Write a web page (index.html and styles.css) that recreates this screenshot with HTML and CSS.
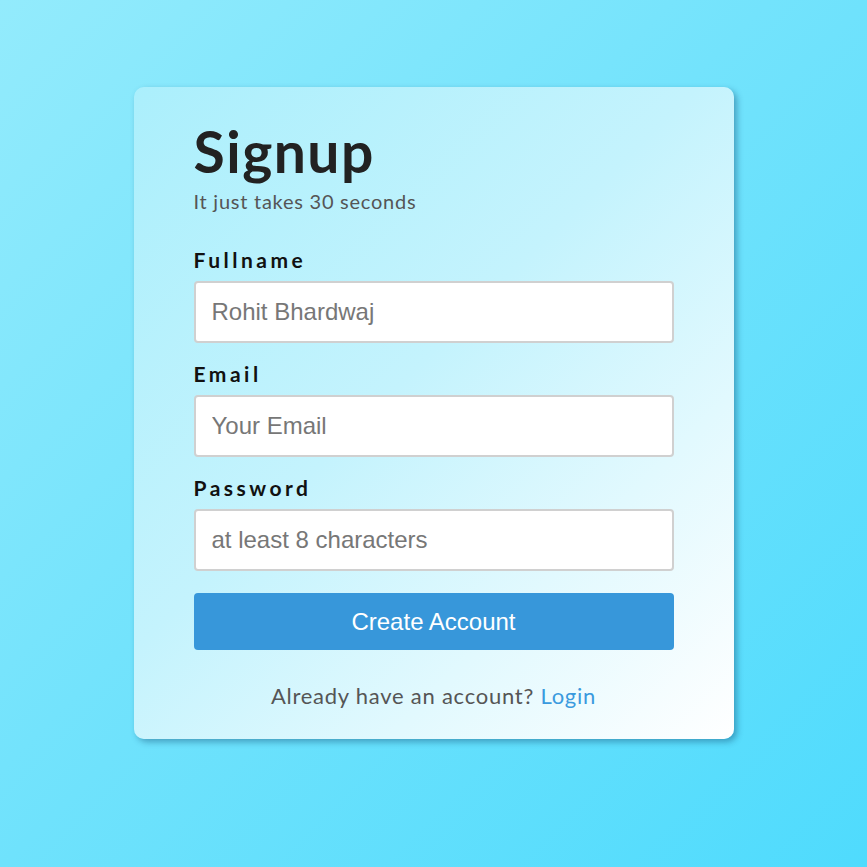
FILE: index.html
```html
<!DOCTYPE html>
<html lang="en">
<head>
<meta charset="utf-8">
<title>Signup</title>
<link rel="stylesheet" href="styles.css">
</head>
<body>
  <main class="page">
    <form class="card">
      <h1 class="title">Signup</h1>
      <p class="subtitle">It just takes 30 seconds</p>
      <label class="label" for="fullname">Fullname</label>
      <input class="input" id="fullname" type="text" placeholder="Rohit Bhardwaj">
      <label class="label" for="email">Email</label>
      <input class="input" id="email" type="email" placeholder="Your Email">
      <label class="label" for="password">Password</label>
      <input class="input" id="password" type="password" placeholder="at least 8 characters">
      <button class="button" type="button">Create Account</button>
      <p class="footer">Already have an account? <a class="link" href="#">Login</a></p>
    </form>
  </main>
</body>
</html>
```
FILE: styles.css
```css
html, body {
  margin: 0;
  padding: 0;
}
body {
  min-height: 100vh;
  background: linear-gradient(135deg, #93ebfc 0%, #6fe2fc 50%, #4fdbfd 100%);
  font-family: "Lato", "Liberation Sans", sans-serif;
}
.page {
  display: flex;
  justify-content: center;
  padding-top: 87px;
  min-height: 100vh;
  box-sizing: border-box;
}
.card {
  width: 600px;
  box-sizing: border-box;
  padding: 31px 60px 30px;
  border-radius: 10px;
  background: linear-gradient(135deg, #abeffc 0%, #c4f3fd 45%, #ffffff 100%);
  box-shadow: 3px 3px 6px rgba(20, 80, 120, 0.45);
  display: flex;
  flex-direction: column;
  align-self: flex-start;
}
.title {
  margin: 0;
  font-size: 57px;
  line-height: 67px;
  font-weight: 700;
  letter-spacing: 1.5px;
  color: #222;
}
.subtitle {
  margin: 4px 0 0;
  font-size: 20px;
  line-height: 24px;
  letter-spacing: 0.75px;
  color: #555;
}
.label {
  display: block;
  margin: 18px 0 9px;
  font-size: 21px;
  line-height: 25px;
  font-weight: 700;
  letter-spacing: 3.5px;
  color: #111;
}
.subtitle + .label {
  margin-top: 34px;
}
.input {
  display: block;
  width: 100%;
  height: 62px;
  box-sizing: border-box;
  margin: 0;
  padding: 0 16px;
  border: 2px solid #d0d0d0;
  border-radius: 4px;
  background: #fff;
  font-family: "Liberation Sans", Arial, sans-serif;
  font-size: 24px;
  color: #333;
  outline: none;
}
.input::placeholder {
  color: #777;
}
.button {
  margin-top: 22px;
  height: 57px;
  width: 100%;
  border: none;
  border-radius: 4px;
  background: #3797da;
  color: #fff;
  font-family: "Liberation Sans", Arial, sans-serif;
  font-size: 24px;
  cursor: pointer;
}
.footer {
  margin: 33px 0 0;
  text-align: center;
  font-size: 22px;
  line-height: 26px;
  letter-spacing: 0.75px;
  color: #555;
}
.link {
  color: #3a9ade;
  text-decoration: none;
}
```
